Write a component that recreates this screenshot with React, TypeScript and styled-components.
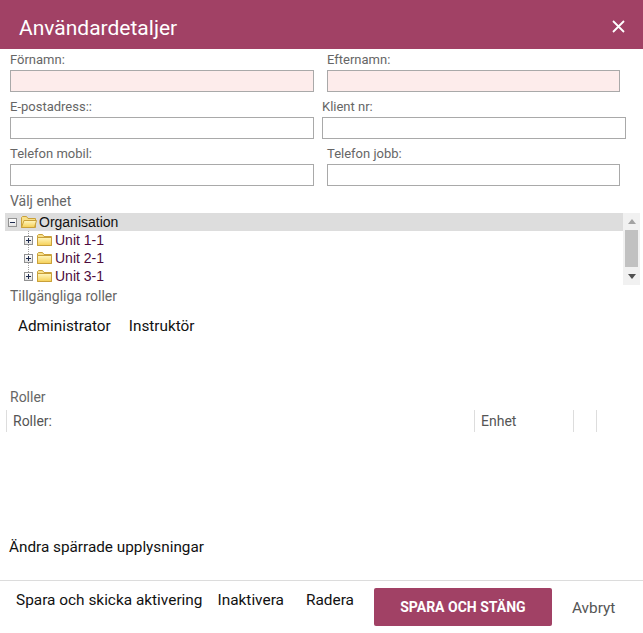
import React from "react";
import styled, { createGlobalStyle } from "styled-components";

const Global = createGlobalStyle`
  html, body { margin: 0; padding: 0; background: #fff; }
  body { font-family: Roboto, "Liberation Sans", Arial, sans-serif; color: #222; }
  * { box-sizing: border-box; }
`;

const MAROON = "#a14165";

const Dialog = styled.div`
  width: 643px;
  height: 633px;
  display: flex;
  flex-direction: column;
  background: #fff;
  overflow: hidden;
`;

const Header = styled.div`
  height: 49px;
  flex: none;
  background: ${MAROON};
  display: flex;
  align-items: center;
  justify-content: space-between;
  padding: 7px 18px 0 19px;
`;

const Title = styled.h1`
  margin: 0;
  font-family: Roboto, sans-serif;
  font-weight: 400;
  font-size: 21px;
  color: #fff;
`;

const CloseButton = styled.button`
  border: 0;
  background: transparent;
  padding: 0;
  width: 13px;
  height: 13px;
  margin-top: -3px;
  display: flex;
  cursor: pointer;
`;

const Body = styled.div`
  flex: 1;
  display: flex;
  flex-direction: column;
`;

const FieldRow = styled.div`
  display: flex;
  padding-left: 10px;
  margin-bottom: 4px;
`;

const Field = styled.div<{ $width: number; $ml?: number }>`
  width: ${(p) => p.$width}px;
  margin-left: ${(p) => p.$ml ?? 0}px;
  display: flex;
  flex-direction: column;
`;

const FieldLabel = styled.label`
  font-size: 13px;
  line-height: 21px;
  color: #666;
`;

const Input = styled.input<{ $required?: boolean }>`
  height: 22px;
  width: 100%;
  border: 1px solid #a9a9a9;
  background: ${(p) => (p.$required ? "#fdeceb" : "#fff")};
  font-family: Roboto, sans-serif;
  font-size: 13px;
  padding: 0 4px;
  outline: none;
`;

const SectionLabel = styled.div<{ $lh: number; $ml?: number }>`
  font-size: 14px;
  line-height: ${(p) => p.$lh}px;
  color: #666;
  padding-left: ${(p) => p.$ml ?? 10}px;
`;

const Tree = styled.div`
  margin-left: 5px;
  width: 635px;
  height: 72px;
  display: flex;
  overflow: hidden;
`;

const TreeList = styled.div`
  flex: 1;
  font-family: "Liberation Sans", Arial, sans-serif;
  font-size: 14px;
`;

const TreeRow = styled.div<{ $selected?: boolean; $indent: number }>`
  height: 18px;
  display: flex;
  align-items: center;
  padding-left: ${(p) => p.$indent}px;
  background: ${(p) => (p.$selected ? "#dddddd" : "transparent")};
`;

const Children = styled.div`
  position: relative;
  &::before {
    content: "";
    position: absolute;
    left: 23px;
    top: 0;
    height: 45px;
    border-left: 1px dotted #a0a0a0;
  }
`;

const Expander = styled.span`
  position: relative;
  z-index: 1;
  width: 9px;
  height: 9px;
  border: 1px solid #919191;
  background: linear-gradient(#fff, #e2e2e2);
  flex: none;
  display: flex;
  align-items: center;
  justify-content: center;
  margin-right: 4px;
`;

const ExpanderH = styled.span`
  position: absolute;
  left: 1px;
  top: 3px;
  width: 5px;
  height: 1px;
  background: #1f2c50;
`;

const ExpanderV = styled.span`
  position: absolute;
  left: 3px;
  top: 1px;
  width: 1px;
  height: 5px;
  background: #1f2c50;
`;

const NodeText = styled.span<{ $unit?: boolean }>`
  margin-left: 2px;
  color: ${(p) => (p.$unit ? "#4d0b3c" : "#111")};
  white-space: nowrap;
`;

const Scrollbar = styled.div`
  width: 17px;
  flex: none;
  background: #f1f1f1;
  display: flex;
  flex-direction: column;
  align-items: center;
`;

const ScrollArrow = styled.div`
  height: 17px;
  width: 17px;
  display: flex;
  align-items: center;
  justify-content: center;
`;

const ScrollTrack = styled.div`
  flex: 1;
  width: 100%;
  display: flex;
  justify-content: center;
`;

const ScrollThumb = styled.div`
  width: 13px;
  height: 37px;
  background: #c1c1c1;
`;

const RolesArea = styled.div`
  height: 79px;
  display: flex;
  align-items: flex-start;
  padding: 9px 0 0 10px;
  gap: 2px;
`;

const RoleItem = styled.div`
  font-size: 15.3px;
  line-height: 20px;
  color: #111;
  padding: 0 8px;
`;

const RolesTable = styled.div`
  margin: 2px 0 0 6px;
  height: 127px;
`;

const TableHeader = styled.div`
  display: flex;
  height: 22px;
`;

const HeadCell = styled.div<{ $width: number }>`
  width: ${(p) => p.$width}px;
  border-left: 1px solid #dddddd;
  font-size: 14px;
  line-height: 22px;
  color: #555;
  padding-left: 6px;
`;

const ChangeLink = styled.div`
  font-size: 15.3px;
  line-height: 20px;
  color: #111;
  padding-left: 9px;
`;

const Footer = styled.div`
  margin-top: auto;
  border-top: 1px solid #dcdcdc;
  height: 53px;
  flex: none;
  display: flex;
  align-items: flex-start;
  padding: 7px 0 0 16px;
`;

const TextButton = styled.button<{ $mr: number; $muted?: boolean; $top?: number }>`
  border: 0;
  background: transparent;
  padding: 0;
  margin: ${(p) => p.$top ?? 0}px ${(p) => p.$mr}px 0 0;
  font-family: Roboto, sans-serif;
  font-size: 15.4px;
  line-height: 24px;
  color: ${(p) => (p.$muted ? "#555" : "#111")};
  cursor: pointer;
  white-space: nowrap;
`;

const PrimaryButton = styled.button`
  width: 178px;
  height: 38px;
  border: 0;
  border-radius: 2px;
  background: ${MAROON};
  color: #fff;
  font-family: Roboto, sans-serif;
  font-weight: 700;
  font-size: 14px;
  margin-right: 20px;
  cursor: pointer;
`;

const FolderIcon = ({ open }: { open?: boolean }) => (
  <svg width="16" height="14" viewBox="0 0 16 14" style={{ flex: "none" }}>
    <defs>
      <linearGradient id={open ? "fo" : "fc"} x1="0" y1="0" x2="0" y2="1">
        <stop offset="0" stopColor="#fff7c2" />
        <stop offset="1" stopColor="#f5cf55" />
      </linearGradient>
    </defs>
    <path d="M0.5 2.5 V12.5 H14.5 V3.5 H7 L5.5 1.5 H1.5 Z" fill="#f8e08a" stroke="#c9a03a" />
    {open ? (
      <path d="M0.5 12.5 L3 5.5 H15.5 L13.5 12.5 Z" fill={`url(#fo)`} stroke="#c9a03a" />
    ) : (
      <path d="M0.5 4.5 H14.5 V12.5 H0.5 Z" fill={`url(#fc)`} stroke="#c9a03a" />
    )}
  </svg>
);

const Toggle = ({ plus }: { plus?: boolean }) => (
  <Expander>
    <ExpanderH />
    {plus && <ExpanderV />}
  </Expander>
);

const units = ["Unit 1-1", "Unit 2-1", "Unit 3-1"];

export default function App() {
  return (
    <>
      <Global />
      <Dialog>
        <Header>
          <Title>Användardetaljer</Title>
          <CloseButton aria-label="Stäng">
            <svg width="13" height="13" viewBox="0 0 13 13">
              <path d="M1 1 L12 12 M12 1 L1 12" stroke="#fff" strokeWidth="1.8" />
            </svg>
          </CloseButton>
        </Header>
        <Body>
          <FieldRow>
            <Field $width={304}>
              <FieldLabel>Förnamn:</FieldLabel>
              <Input $required />
            </Field>
            <Field $width={293} $ml={13}>
              <FieldLabel>Efternamn:</FieldLabel>
              <Input $required />
            </Field>
          </FieldRow>
          <FieldRow>
            <Field $width={304}>
              <FieldLabel>E-postadress::</FieldLabel>
              <Input />
            </Field>
            <Field $width={304} $ml={8}>
              <FieldLabel>Klient nr:</FieldLabel>
              <Input />
            </Field>
          </FieldRow>
          <FieldRow>
            <Field $width={304}>
              <FieldLabel>Telefon mobil:</FieldLabel>
              <Input />
            </Field>
            <Field $width={293} $ml={13}>
              <FieldLabel>Telefon jobb:</FieldLabel>
              <Input />
            </Field>
          </FieldRow>

          <SectionLabel $lh={23}>Välj enhet</SectionLabel>
          <Tree>
            <TreeList>
              <TreeRow $selected $indent={3}>
                <Toggle />
                <FolderIcon open />
                <NodeText>Organisation</NodeText>
              </TreeRow>
              <Children>
                {units.map((u) => (
                  <TreeRow key={u} $indent={19}>
                    <Toggle plus />
                    <FolderIcon />
                    <NodeText $unit>{u}</NodeText>
                  </TreeRow>
                ))}
              </Children>
            </TreeList>
            <Scrollbar>
              <ScrollArrow>
                <svg width="8" height="5" viewBox="0 0 8 5">
                  <path d="M0 5 L4 0 L8 5 Z" fill="#a3a3a3" />
                </svg>
              </ScrollArrow>
              <ScrollTrack>
                <ScrollThumb />
              </ScrollTrack>
              <ScrollArrow>
                <svg width="8" height="5" viewBox="0 0 8 5">
                  <path d="M0 0 L8 0 L4 5 Z" fill="#505050" />
                </svg>
              </ScrollArrow>
            </Scrollbar>
          </Tree>

          <SectionLabel $lh={22}>Tillgängliga roller</SectionLabel>
          <RolesArea>
            <RoleItem>Administrator</RoleItem>
            <RoleItem>Instruktör</RoleItem>
          </RolesArea>

          <SectionLabel $lh={22}>Roller</SectionLabel>
          <RolesTable>
            <TableHeader>
              <HeadCell $width={468}>Roller:</HeadCell>
              <HeadCell $width={99}>Enhet</HeadCell>
              <HeadCell $width={23} />
              <HeadCell $width={24} />
            </TableHeader>
          </RolesTable>

          <ChangeLink>Ändra spärrade upplysningar</ChangeLink>

          <Footer>
            <TextButton $mr={15}>Spara och skicka aktivering</TextButton>
            <TextButton $mr={22}>Inaktivera</TextButton>
            <TextButton $mr={20}>Radera</TextButton>
            <PrimaryButton>SPARA OCH STÄNG</PrimaryButton>
            <TextButton $mr={0} $muted $top={8}>Avbryt</TextButton>
          </Footer>
        </Body>
      </Dialog>
    </>
  );
}
